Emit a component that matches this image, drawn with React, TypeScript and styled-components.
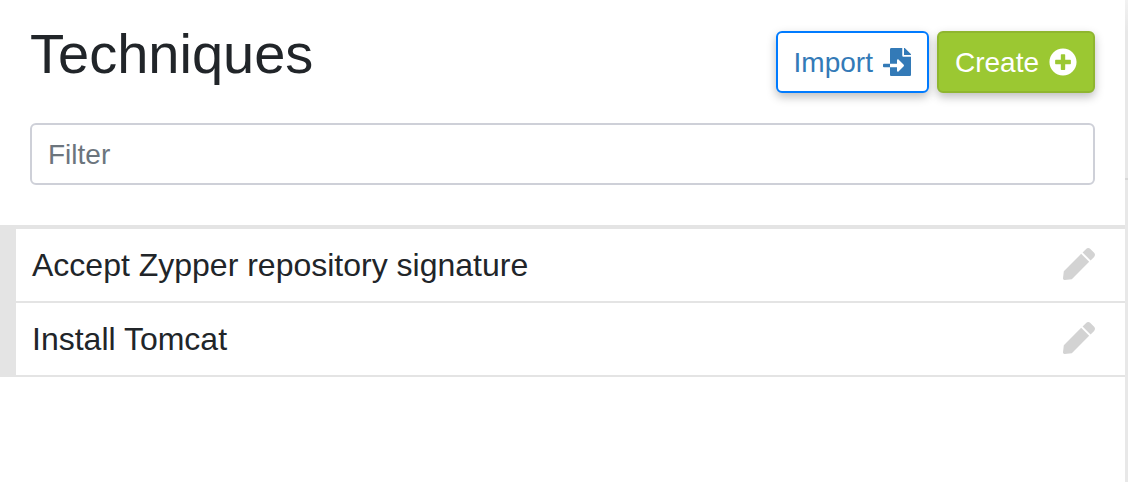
import React, { useState } from "react";
import styled, { createGlobalStyle } from "styled-components";
import { FaFileImport, FaPen, FaPlusCircle } from "react-icons/fa";

const GlobalStyle = createGlobalStyle`
  *, *::before, *::after { box-sizing: border-box; }
  body {
    margin: 0;
    background: #fff;
    color: #212529;
    font-family: "Liberation Sans", Arial, sans-serif;
  }
`;

const Layout = styled.div`
  display: grid;
  grid-template-columns: 1fr 3px;
  min-height: 100vh;
`;

const Panel = styled.main`
  min-width: 0;
`;

const NextPanelEdge = styled.div`
  background: linear-gradient(#f2f2f2, #e8e8e8 32px);
`;

const NextPanelTop = styled.div`
  height: 180px;
  border-bottom: 2px solid #d6d6d6;
`;

const Header = styled.header`
  display: flex;
  flex-wrap: wrap;
  justify-content: space-between;
  align-items: flex-start;
  padding: 20px 30px 0;
`;

const Title = styled.h1`
  margin: 0;
  font-size: 56px;
  font-weight: 400;
  line-height: 68px;
`;

const Actions = styled.div`
  display: flex;
  gap: 8px;
  padding-top: 11px;
`;

const Button = styled.button<{ $primary?: boolean }>`
  display: flex;
  align-items: center;
  gap: 10px;
  height: 62px;
  padding: 0 16px;
  border: 2px solid ${(p) => (p.$primary ? "#8fb62f" : "#007bff")};
  border-radius: 6px;
  background: ${(p) => (p.$primary ? "#9bc832" : "#fff")};
  color: ${(p) => (p.$primary ? "#fff" : "#337ab7")};
  font-family: inherit;
  font-size: 28px;
  line-height: 42px;
  box-shadow: 0 4px 10px rgba(0, 0, 0, 0.26);
  cursor: pointer;
`;

const ButtonLabel = styled.span`
  padding-top: 2px;
`;

const FilterBar = styled.div`
  padding: 30px 30px 40px;
`;

const FilterInput = styled.input`
  display: block;
  width: 100%;
  height: 62px;
  padding: 2px 16px 0;
  border: 2px solid #ced0d8;
  border-radius: 6px;
  background: #fff;
  color: #495057;
  font-family: inherit;
  font-size: 28px;

  &::placeholder {
    color: #6c757d;
    opacity: 1;
  }
`;

const List = styled.ul`
  margin: 0;
  padding: 0;
  list-style: none;
  border-top: 4px solid #e4e4e4;
`;

const Row = styled.li`
  display: flex;
  align-items: center;
  justify-content: space-between;
  height: 74px;
  padding: 0 30px 0 16px;
  border: solid #e4e4e4;
  border-width: 0 0 2px 16px;
`;

const RowName = styled.span`
  font-size: 32px;
  line-height: 48px;
`;

const EditButton = styled.button`
  display: flex;
  padding: 0 0 2px;
  border: 0;
  background: none;
  color: #d3d3d3;
  font-size: 32px;
  cursor: pointer;
`;

const techniques = ["Accept Zypper repository signature", "Install Tomcat"];

export default function App() {
  const [filter, setFilter] = useState("");
  const shown = techniques.filter((name) =>
    name.toLowerCase().includes(filter.toLowerCase())
  );

  return (
    <>
      <GlobalStyle />
      <Layout>
        <Panel>
          <Header>
            <Title>Techniques</Title>
            <Actions>
              <Button type="button">
                <ButtonLabel>Import</ButtonLabel>
                <FaFileImport aria-hidden />
              </Button>
              <Button type="button" $primary>
                <ButtonLabel>Create</ButtonLabel>
                <FaPlusCircle aria-hidden />
              </Button>
            </Actions>
          </Header>
          <FilterBar>
            <FilterInput
              type="text"
              aria-label="Filter"
              placeholder="Filter"
              value={filter}
              onChange={(e) => setFilter(e.target.value)}
            />
          </FilterBar>
          <List>
            {shown.map((name) => (
              <Row key={name}>
                <RowName>{name}</RowName>
                <EditButton type="button" aria-label={`Edit ${name}`}>
                  <FaPen aria-hidden />
                </EditButton>
              </Row>
            ))}
          </List>
        </Panel>
        <NextPanelEdge>
          <NextPanelTop />
        </NextPanelEdge>
      </Layout>
    </>
  );
}
